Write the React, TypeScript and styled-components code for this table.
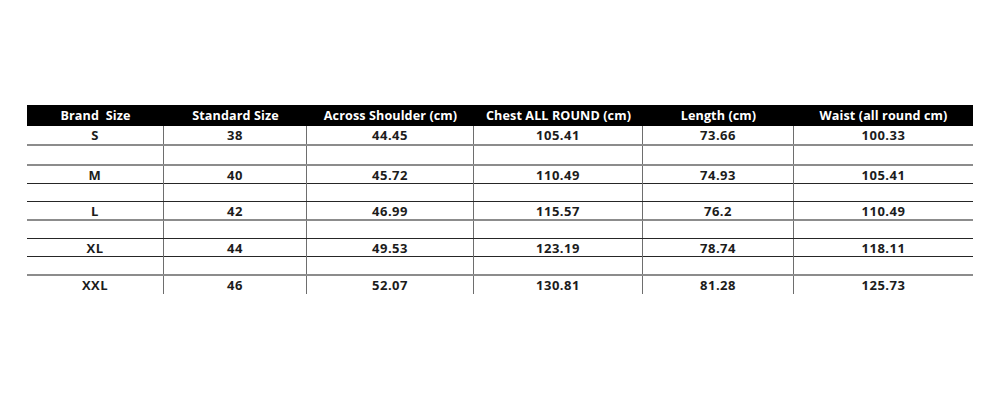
import React from "react";
import styled, { createGlobalStyle } from "styled-components";

const Global = createGlobalStyle`
  html, body { margin: 0; padding: 0; background: #ffffff; }
  body { font-family: "Open Sans", Lato, "Liberation Sans", sans-serif; }
`;

const Page = styled.div`
  width: 1000px;
  height: 400px;
  box-sizing: border-box;
  padding: 105px 0 0 27px;
  background: #fff;
`;

const COLS = "137px 143px 167px 169px 151px 179px";

const Table = styled.div`
  width: 946px;
  display: flex;
  flex-direction: column;
`;

const HeaderRow = styled.div`
  display: grid;
  grid-template-columns: ${COLS};
  height: 21px;
  background: #000;
  color: #fff;
  align-items: center;
`;

const HeadCell = styled.div`
  text-align: center;
  font-weight: 700;
  font-size: 12.6px;
  letter-spacing: 0.1px;
  white-space: pre;
  line-height: 21px;
`;

const Row = styled.div<{ $h: number; $line: "gray" | "black" | "none" }>`
  display: grid;
  grid-template-columns: ${COLS};
  height: ${(p) => p.$h}px;
  box-sizing: border-box;
  border-bottom: ${(p) =>
    p.$line === "gray" ? "2px solid #8c8c8c" : p.$line === "black" ? "1px solid #262626" : "none"};
`;

const Cell = styled.div<{ $last?: boolean }>`
  text-align: center;
  font-weight: 700;
  font-size: 13px;
  letter-spacing: 0.5px;
  color: #1c1c1c;
  display: flex;
  align-items: center;
  justify-content: center;
  border-right: ${(p) => (p.$last ? "none" : "1.5px solid #6e6e6e")};
`;

const headers = [
  "Brand  Size",
  "Standard Size",
  "Across Shoulder (cm)",
  "Chest ALL ROUND (cm)",
  "Length (cm)",
  "Waist (all round cm)",
];

const data = [
  ["S", "38", "44.45", "105.41", "73.66", "100.33"],
  ["M", "40", "45.72", "110.49", "74.93", "105.41"],
  ["L", "42", "46.99", "115.57", "76.2", "110.49"],
  ["XL", "44", "49.53", "123.19", "78.74", "118.11"],
  ["XXL", "46", "52.07", "130.81", "81.28", "125.73"],
];

type Line = "gray" | "black" | "none";
const blank = ["", "", "", "", "", ""];
const rows: { h: number; line: Line; values: string[] }[] = [
  { h: 20, line: "gray", values: data[0] },
  { h: 20, line: "gray", values: blank },
  { h: 18, line: "black", values: data[1] },
  { h: 18, line: "black", values: blank },
  { h: 19, line: "gray", values: data[2] },
  { h: 18, line: "black", values: blank },
  { h: 18, line: "black", values: data[3] },
  { h: 19, line: "gray", values: blank },
  { h: 17, line: "none", values: data[4] },
];

export default function App() {
  return (
    <Page>
      <Global />
      <Table>
        <HeaderRow>
          {headers.map((h) => (
            <HeadCell key={h}>{h}</HeadCell>
          ))}
        </HeaderRow>
        {rows.map((r, i) => (
          <Row key={i} $h={r.h} $line={r.line}>
            {r.values.map((v, j) => (
              <Cell key={j} $last={j === 5}>
                {v}
              </Cell>
            ))}
          </Row>
        ))}
      </Table>
    </Page>
  );
}
